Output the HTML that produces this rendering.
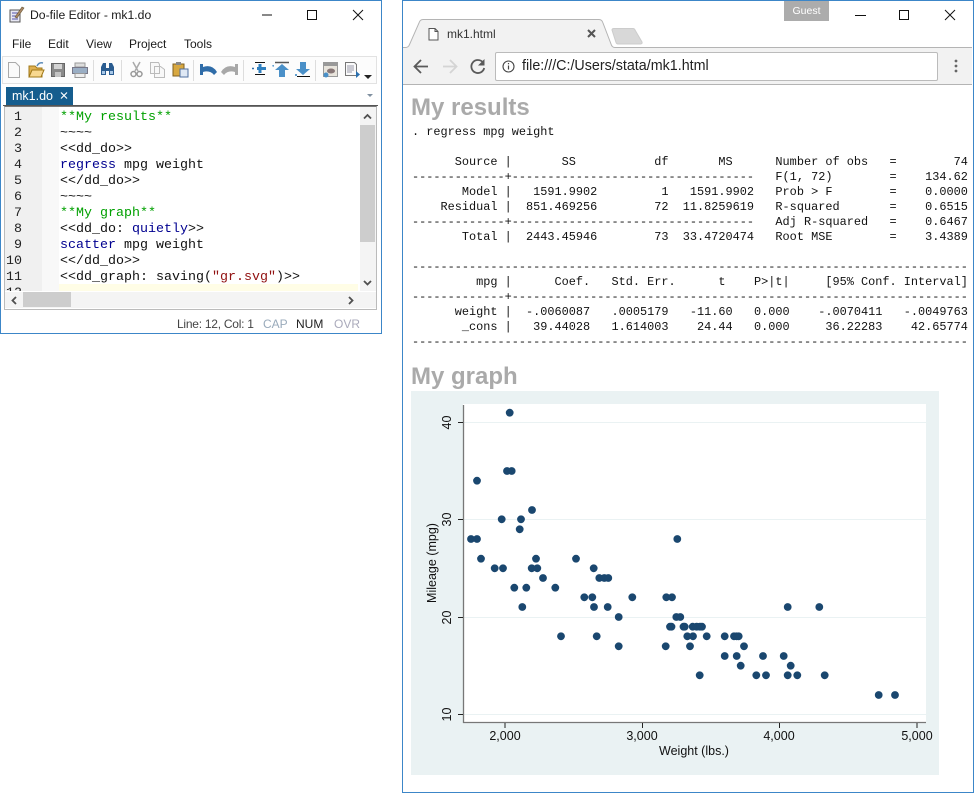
<!DOCTYPE html>
<html><head><meta charset="utf-8"><title>mk1</title>
<style>
html,body{margin:0;padding:0;background:#fff;width:974px;height:793px;overflow:hidden}
body{position:relative;font-family:"Liberation Sans",sans-serif}
.a{position:absolute}
.t{position:absolute;white-space:pre;font-size:12px;line-height:14px;color:#1a1a1a}
.code{position:absolute;left:60px;font:13.33px/16px "Liberation Mono",monospace;white-space:pre;color:#111;height:16px}
.ln{position:absolute;width:24px;left:-2px;text-align:right;font:13.33px/16px "Liberation Mono",monospace;color:#222}
.g{color:#00a000}.b{color:#000090}.r{color:#901010}
pre{margin:0;position:absolute;left:412px;font:11.88px/15px "Liberation Mono",monospace;color:#111;white-space:pre}
h2{margin:0;position:absolute;left:411px;font:bold 24px/28px "Liberation Sans",sans-serif;color:#aaa}
svg{position:absolute;overflow:visible}
</style></head><body>

<!-- Editor window -->
<div class="a" style="left:0;top:0;width:380px;height:332px;border:1px solid #3c86c8;background:#fff"></div>
<svg style="left:0;top:0" width="382" height="334">
<path d="M10 10h10v12H10z" fill="#e8e8f4" stroke="#555"/><path d="M12 13h6M12 16h6M12 19h6" stroke="#55a"/><path d="M15 17l7-10 2 1-7 10z" fill="#a86" stroke="#653" stroke-width=".6"/>
<path d="M262 15h10" stroke="#111"/><rect x="307.5" y="10.5" width="9" height="9" fill="none" stroke="#111"/><path d="M353 10l10 10M363 10l-10 10" stroke="#111"/>
</svg>
<div class="t" style="left:30px;top:8px;font-size:12.2px">Do-file Editor - mk1.do</div>
<div class="t" style="left:12px;top:37px">File</div>
<div class="t" style="left:48px;top:37px">Edit</div>
<div class="t" style="left:86px;top:37px">View</div>
<div class="t" style="left:129px;top:37px">Project</div>
<div class="t" style="left:184px;top:37px">Tools</div>

<div class="a" style="left:2px;top:56px;width:373px;height:26px;border:1px solid #e2e2e2;background:#fcfcfc"></div>
<svg style="left:0;top:0" width="382" height="90">
<path d="M93.5 60v21M121.5 60v21M193.5 60v21M243.5 60v21M315.5 60v21" stroke="#ddd"/>
<path d="M8.5 62.5h7l4 4v11h-11z" fill="#fafafa" stroke="#aaa"/>
<path d="M29 66h6l2 2h5v9H29z" fill="#e0b050" stroke="#a07818"/><path d="M29 77l3-7h12l-3 7z" fill="#f8d890" stroke="#a07818"/><path d="M37 66q2-4 6-3" fill="none" stroke="#5a8ab8" stroke-width="1.5"/>
<path d="M51.5 63.5h13v13h-13z" fill="#8a8a8a" stroke="#666"/><path d="M54 64h8v5h-8z" fill="#d4d4d4"/><path d="M55 72h6v5h-6z" fill="#c4c4c4"/>
<path d="M75 63h10v4H75z" fill="#ddd" stroke="#999"/><path d="M72.5 67.5h15v6h-15z" fill="#9aaec4" stroke="#778"/><path d="M75 73.5h10v4H75z" fill="#eee" stroke="#999"/>
<path d="M101 67l2-4h3v5h3v-5h3l2 4v8h-5v-4h-3v4h-5z" fill="#2a5c90"/><path d="M102 71h3v3h-3zM110 71h3v3h-3z" fill="#a8c8e8"/>
<path d="M133 62l5 9M140 62l-5 9" stroke="#aaa" stroke-width="1.5"/><circle cx="133.5" cy="74" r="2.5" fill="none" stroke="#999" stroke-width="1.5"/><circle cx="139.5" cy="74" r="2.5" fill="none" stroke="#999" stroke-width="1.5"/>
<path d="M150.5 62.5h8l1 2v9h-9zM154.5 66.5h6l4 3v8h-10z" fill="#f8f8f8" stroke="#bbb"/>
<path d="M173 64h11v12h-11z" fill="#d8a840" stroke="#806020"/><path d="M176 62h5v3h-5z" fill="#888"/><path d="M180 69h8v8h-8z" fill="#dfe8f4" stroke="#5070a0"/>
<path d="M200 64h3v3q9-3 14 5l-3 3q-4-5-11-3v3h-3z" fill="#2f6ca8"/>
<path d="M238 64h-3v3q-9-3-14 5l3 3q4-5 11-3v3h3z" fill="#a8a8a8"/>
<path d="M255 62.5h10M255 74.5h10" stroke="#111"/><path d="M252 68.5h2" stroke="#2f6ca8" stroke-width="1.5"/><path d="M257 68.5h9M260 64v9" stroke="#2f80c0" stroke-width="3"/>
<path d="M275 62.5h14" stroke="#555" stroke-width="1.5"/><path d="M273 65v1h1" stroke="#2f80c0"/><path d="M282 64l7 6h-4v7h-6v-7h-4z" fill="#4a90c8"/>
<path d="M297 76.5h13" stroke="#111"/><path d="M295 75h2" stroke="#2f80c0" stroke-width="1.5"/><path d="M300 62h6v7h4l-7 6-7-6h4z" fill="#4a90c8"/>
<path d="M323.5 62.5h14v14h-14z" fill="#e8e4dc" stroke="#999"/><path d="M324 63h13v3h-13z" fill="#999"/><ellipse cx="331" cy="71" rx="4" ry="2.5" fill="#877"/><circle cx="326" cy="75" r="2.5" fill="#4a90c8"/>
<path d="M345.5 62.5h9l2 2v11h-11z" fill="#fafafa" stroke="#777"/><path d="M347 66h7M347 68h7M347 70h7M347 72h5" stroke="#99a"/><path d="M356 71l4 3.5-4 3.5z" fill="#2a70b0"/>
<path d="M364 75h8l-4 4z" fill="#222"/>
</svg>

<div class="a" style="left:6px;top:87px;width:67px;height:18px;background:#155d8e"></div>
<div class="t" style="left:12px;top:89px;color:#fff;font-size:12.5px">mk1.do</div>
<svg style="left:0;top:0" width="90" height="110"><path d="M61 92.5l6 6M67 92.5l-6 6" stroke="#fff" stroke-width="1.2"/></svg>
<svg style="left:0;top:0" width="380" height="100"><path d="M367 94h6l-3 3z" fill="#8090a0"/></svg>
<div class="a" style="left:3px;top:105px;width:375px;height:1px;background:#555"></div>

<div class="a" style="left:4px;top:106px;width:373px;height:204px;border:1px solid #bbb;border-top:1px solid #777;background:#fff;box-sizing:border-box"></div>
<div class="a" style="left:5px;top:107px;width:37px;height:184px;background:#f0f0f0"></div>
<div class="a" style="left:42px;top:107px;width:17px;height:184px;background:#f8f8f8"></div>
<div class="a" style="left:59px;top:284px;width:299px;height:7px;background:#fffde6"></div>

<div class="a" style="left:0;top:107px;width:380px;height:184px;overflow:hidden">
<div class="a" style="left:0;top:2px;width:380px;height:200px">
<div class="ln" style="top:1px">1</div><div class="ln" style="top:17px">2</div><div class="ln" style="top:33px">3</div><div class="ln" style="top:49px">4</div><div class="ln" style="top:65px">5</div><div class="ln" style="top:81px">6</div><div class="ln" style="top:97px">7</div><div class="ln" style="top:113px">8</div><div class="ln" style="top:129px">9</div><div class="ln" style="top:145px">10</div><div class="ln" style="top:161px">11</div><div class="ln" style="top:177px">12</div>
<div class="code" style="top:1px"><span class="g">**My results**</span></div>
<div class="code" style="top:17px">~~~~</div>
<div class="code" style="top:33px">&lt;&lt;dd_do&gt;&gt;</div>
<div class="code" style="top:49px"><span class="b">regress</span> mpg weight</div>
<div class="code" style="top:65px">&lt;&lt;/dd_do&gt;&gt;</div>
<div class="code" style="top:81px">~~~~</div>
<div class="code" style="top:97px"><span class="g">**My graph**</span></div>
<div class="code" style="top:113px">&lt;&lt;dd_do: <span class="b">quietly</span>&gt;&gt;</div>
<div class="code" style="top:129px"><span class="b">scatter</span> mpg weight</div>
<div class="code" style="top:145px">&lt;&lt;/dd_do&gt;&gt;</div>
<div class="code" style="top:161px">&lt;&lt;dd_graph: saving(<span class="r">"gr.svg"</span>)&gt;&gt;</div>
</div>
</div>

<div class="a" style="left:360px;top:107px;width:16px;height:184px;background:#f4f4f4"></div>
<div class="a" style="left:360px;top:125px;width:15px;height:117px;background:#cdcdcd"></div>
<div class="a" style="left:5px;top:292px;width:371px;height:16px;background:#f4f4f4"></div>
<div class="a" style="left:23px;top:292px;width:48px;height:15px;background:#cdcdcd"></div>
<svg style="left:0;top:0" width="382" height="334">
<path d="M364 118.5l3.500-3.500 3.500 3.500M364 281l3.500 3.500 3.500-3.500M16 297l-3.500 3.500 3.500 3.500M349 297l3.500 3.500-3.500 3.500" fill="none" stroke="#505050" stroke-width="1.8"/>
</svg>
<div class="t" style="left:177px;top:317px;color:#444;letter-spacing:-.25px">Line: 12, Col: 1</div>
<div class="t" style="left:263px;top:317px;color:#9ab">CAP</div>
<div class="t" style="left:296px;top:317px;color:#222">NUM</div>
<div class="t" style="left:334px;top:317px;color:#aab">OVR</div>

<!-- Browser window -->
<div class="a" style="left:402px;top:0;width:570px;height:791px;border:1px solid #3c86c8;background:#fff"></div>
<div class="a" style="left:403px;top:48px;width:569px;height:36px;background:#f2f2f2;border-bottom:1px solid #b4b4b4"></div>
<div class="a" style="left:495px;top:52px;width:441px;height:27px;background:#fff;border:1px solid #bbb;border-radius:2px"></div>
<svg style="left:0;top:0" width="974" height="100">
<path d="M403 47.5h2.500q3 0 4-3L419 23q1-3.500 4-3.500h176q3 0 4 3.500l8 21q1 3.500 4 3.500H972v2H403z" fill="#f2f2f2"/>
<path d="M403 47.5h2.500q3 0 4-3L419 23q1-3.500 4-3.500h176q3 0 4 3.500l8 21q1 3.500 4 3.500H972" fill="none" stroke="#b4b4b4"/>
<path d="M612 30q0-1.500 2-1.500h19q1.500 0 2 1.500l7 12q.5 2-1.500 2H618q-1.500 0-2-1.500z" fill="#d8d8d8" stroke="#ccc"/>
<path d="M429 28.500h6l3 3v8.500h-9z M435 28.500v3h3" fill="#fff" stroke="#555"/>
<path d="M588 30l7 7M595 30l-7 7" stroke="#555" stroke-width="2"/>
<path d="M855 15.5h11" stroke="#111"/><rect x="899.5" y="10.5" width="9" height="9" fill="none" stroke="#111"/><path d="M945 10l10 10M955 10l-10 10" stroke="#111"/>
<path d="M428 66.5h-13M421 60l-6.500 6.500 6.500 6.500" fill="none" stroke="#5a5a5a" stroke-width="1.8"/>
<path d="M443 66.5h13M450 60l6.500 6.500-6.500 6.500" fill="none" stroke="#d4d4d4" stroke-width="1.8"/>
<path d="M483 62.5a6.500 6.500 0 1 0 1.200 5.500" fill="none" stroke="#5a5a5a" stroke-width="1.8"/><path d="M484.5 59v6.500h-6.500z" fill="#5a5a5a"/>
<circle cx="508.5" cy="66.5" r="5.5" fill="none" stroke="#444" stroke-width="1.1"/><path d="M508.5 65.5v4M508.5 63v1.300" stroke="#444" stroke-width="1.2"/>
<circle cx="956" cy="61" r="1.4" fill="#666"/><circle cx="956" cy="66" r="1.4" fill="#666"/><circle cx="956" cy="71" r="1.4" fill="#666"/>
</svg>
<div class="a" style="left:784px;top:1px;width:45px;height:20px;background:#acacac;color:#fff;font-size:10.5px;line-height:20px;text-align:center">Guest</div>
<div class="t" style="left:447px;top:27px;color:#333">mk1.html</div>
<div class="t" style="left:522px;top:59px;font-size:14.3px;color:#222">file:///C:/Users/stata/mk1.html</div>

<h2 style="top:94px">My results</h2>
<pre style="top:125px">. regress mpg weight

      Source |       SS           df       MS      Number of obs   =        74
-------------+----------------------------------   F(1, 72)        =    134.62
       Model |   1591.9902         1   1591.9902   Prob &gt; F        =    0.0000
    Residual |  851.469256        72  11.8259619   R-squared       =    0.6515
-------------+----------------------------------   Adj R-squared   =    0.6467
       Total |  2443.45946        73  33.4720474   Root MSE        =    3.4389

------------------------------------------------------------------------------
         mpg |      Coef.   Std. Err.      t    P&gt;|t|     [95% Conf. Interval]
-------------+----------------------------------------------------------------
      weight |  -.0060087   .0005179   -11.60   0.000    -.0070411   -.0049763
       _cons |   39.44028   1.614003    24.44   0.000     36.22283    42.65774
------------------------------------------------------------------------------</pre>
<h2 style="top:363px">My graph</h2>

<!-- Graph -->
<svg style="left:0;top:0" width="974" height="793" font-family="Liberation Sans, sans-serif" font-size="12.5" fill="#111">
<rect x="411" y="391" width="528" height="384" fill="#eaf2f3"/>
<rect x="463" y="404" width="463" height="319" fill="#fff"/>
<path d="M464 422.5h462M464 519.5h462M464 617.5h462M464 714.5h462" stroke="#eaf2f3"/>
<path d="M463.5 405v318M463 722.5h463" stroke="#777" stroke-width="1.3" fill="none"/>
<path d="M458 422.5h5M458 519.5h5M458 617.5h5M458 714.5h5M505 723v5M642.5 723v5M779.5 723v5M917 723v5" stroke="#222"/>
<text x="505" y="740" text-anchor="middle">2,000</text>
<text x="642" y="740" text-anchor="middle">3,000</text>
<text x="779" y="740" text-anchor="middle">4,000</text>
<text x="917" y="740" text-anchor="middle">5,000</text>
<text x="694" y="755" text-anchor="middle">Weight (lbs.)</text>
<text transform="translate(451,422.5) rotate(-90)" text-anchor="middle">40</text>
<text transform="translate(451,519.5) rotate(-90)" text-anchor="middle">30</text>
<text transform="translate(451,617.5) rotate(-90)" text-anchor="middle">20</text>
<text transform="translate(451,714.5) rotate(-90)" text-anchor="middle">10</text>
<text transform="translate(436,563) rotate(-90)" text-anchor="middle">Mileage (mpg)</text>
<g fill="#1a476f">
<circle cx="509.7" cy="412.7" r="3.9"/><circle cx="507" cy="471" r="3.9"/><circle cx="511.7" cy="471" r="3.9"/><circle cx="477" cy="480.7" r="3.9"/><circle cx="532" cy="510" r="3.9"/><circle cx="501.7" cy="519.3" r="3.9"/><circle cx="521" cy="519.3" r="3.9"/><circle cx="519.7" cy="529.3" r="3.9"/><circle cx="471" cy="539" r="3.9"/><circle cx="477" cy="539" r="3.9"/><circle cx="677.3" cy="539" r="3.9"/>
<circle cx="481" cy="558.7" r="3.9"/><circle cx="536" cy="558.7" r="3.9"/><circle cx="576" cy="558.7" r="3.9"/>
<circle cx="494.7" cy="568.3" r="3.9"/><circle cx="503" cy="568.3" r="3.9"/><circle cx="531.7" cy="568.3" r="3.9"/><circle cx="537.3" cy="568.3" r="3.9"/><circle cx="593.7" cy="568.3" r="3.9"/>
<circle cx="543" cy="578" r="3.9"/><circle cx="599.3" cy="578" r="3.9"/><circle cx="604.3" cy="578" r="3.9"/><circle cx="608.3" cy="578" r="3.9"/>
<circle cx="514.3" cy="587.7" r="3.9"/><circle cx="526.3" cy="587.7" r="3.9"/><circle cx="555.3" cy="587.7" r="3.9"/>
<circle cx="584.3" cy="597.3" r="3.9"/><circle cx="592.3" cy="597.3" r="3.9"/><circle cx="632.3" cy="597.3" r="3.9"/><circle cx="666.3" cy="597.3" r="3.9"/><circle cx="672" cy="597.3" r="3.9"/>
<circle cx="522.3" cy="607" r="3.9"/><circle cx="594" cy="607" r="3.9"/><circle cx="607.7" cy="607" r="3.9"/><circle cx="787.7" cy="607" r="3.9"/><circle cx="819.3" cy="607" r="3.9"/>
<circle cx="618.7" cy="617" r="3.9"/><circle cx="676.3" cy="617" r="3.9"/><circle cx="680.3" cy="617" r="3.9"/>
<circle cx="670" cy="626.7" r="3.9"/><circle cx="671.5" cy="626.7" r="3.9"/><circle cx="683.5" cy="626.7" r="3.9"/><circle cx="684.7" cy="626.7" r="3.9"/><circle cx="692.7" cy="626.7" r="3.9"/><circle cx="696.7" cy="626.7" r="3.9"/><circle cx="700" cy="626.7" r="3.9"/><circle cx="702" cy="626.7" r="3.9"/>
<circle cx="561" cy="636.3" r="3.9"/><circle cx="596.7" cy="636.3" r="3.9"/><circle cx="687.3" cy="636.3" r="3.9"/><circle cx="693" cy="636.3" r="3.9"/><circle cx="706.7" cy="636.3" r="3.9"/><circle cx="724.7" cy="636.3" r="3.9"/><circle cx="734" cy="636.3" r="3.9"/><circle cx="736.7" cy="636.3" r="3.9"/><circle cx="738.7" cy="636.3" r="3.9"/>
<circle cx="618.7" cy="646.3" r="3.9"/><circle cx="665.7" cy="646.3" r="3.9"/><circle cx="690" cy="646.3" r="3.9"/><circle cx="744" cy="646.3" r="3.9"/>
<circle cx="724.7" cy="656" r="3.9"/><circle cx="736.7" cy="656" r="3.9"/><circle cx="763" cy="656" r="3.9"/><circle cx="783.7" cy="656" r="3.9"/>
<circle cx="740.7" cy="665.7" r="3.9"/><circle cx="790.7" cy="665.7" r="3.9"/>
<circle cx="699.7" cy="675.3" r="3.9"/><circle cx="756.3" cy="675.3" r="3.9"/><circle cx="766" cy="675.3" r="3.9"/><circle cx="787.7" cy="675.3" r="3.9"/><circle cx="797.3" cy="675.3" r="3.9"/><circle cx="824.7" cy="675.3" r="3.9"/>
<circle cx="878.7" cy="695" r="3.9"/><circle cx="895" cy="695" r="3.9"/>
</g>
</svg>
</body></html>
